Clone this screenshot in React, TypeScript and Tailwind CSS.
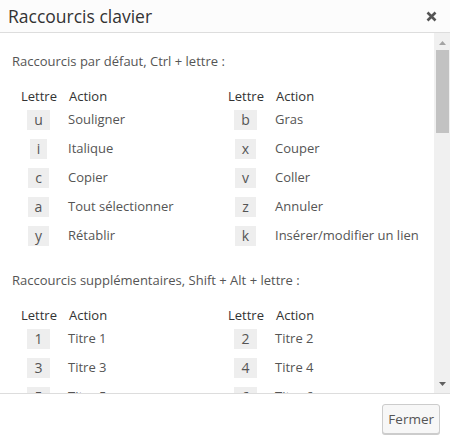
import React from "react";

const font = { fontFamily: '"Open Sans", "Noto Sans", sans-serif' };

type Row = [string, string];

const ctrlRows: [Row, Row][] = [
  [["u", "Souligner"], ["b", "Gras"]],
  [["i", "Italique"], ["x", "Couper"]],
  [["c", "Copier"], ["v", "Coller"]],
  [["a", "Tout sélectionner"], ["z", "Annuler"]],
  [["y", "Rétablir"], ["k", "Insérer/modifier un lien"]],
];

const altRows: [Row, Row][] = [
  [["1", "Titre 1"], ["2", "Titre 2"]],
  [["3", "Titre 3"], ["4", "Titre 4"]],
  [["5", "Titre 5"], ["6", "Titre 6"]],
];

function Half({ rows }: { rows: Row[] }) {
  return (
    <div className="flex flex-col">
      <div className="flex h-[21px] items-center pt-[4px] text-[13px] text-[#333]">
        <div className="w-[48px]">Lettre</div>
        <div>Action</div>
      </div>
      {rows.map(([k, a]) => (
        <div key={k} className="flex h-[29px] items-center text-[13px] text-[#555]">
          <div className="flex w-[35px] justify-center">
            <span className="flex h-[20px] items-center bg-[#eeeeee] px-[7px] text-[14px] leading-none">
              {k}
            </span>
          </div>
          <div className="pl-[12px]">{a}</div>
        </div>
      ))}
    </div>
  );
}

function Section({ title, rows }: { title: string; rows: [Row, Row][] }) {
  return (
    <div>
      <p className="h-[20px] text-[13px] leading-[20px] text-[#555]">{title}</p>
      <div className="mt-[13px] grid grid-cols-[207px_207px] pl-[9px]">
        <Half rows={rows.map((r) => r[0])} />
        <Half rows={rows.map((r) => r[1])} />
      </div>
    </div>
  );
}

export default function App() {
  return (
    <div className="flex h-[442px] w-[450px] flex-col overflow-hidden bg-white" style={font}>
      <div className="flex h-[33px] shrink-0 items-center justify-between border-b border-[#dddddd] bg-[#fcfcfc] pl-[8px] pr-[13px]">
        <span className="text-[17.5px] text-[#333]">Raccourcis clavier</span>
        <svg width="11" height="11" viewBox="0 0 11 11">
          <path d="M1.5 1.5 L9.5 9.5 M9.5 1.5 L1.5 9.5" stroke="#555" strokeWidth="2.6" strokeLinecap="butt" />
        </svg>
      </div>
      <div className="flex h-[360px] shrink-0">
        <div className="flex-1 overflow-hidden pl-[12px] pt-[18px]">
          <Section title="Raccourcis par défaut, Ctrl + lettre :" rows={ctrlRows} />
          <div className="h-[20px]" />
          <Section title="Raccourcis supplémentaires, Shift + Alt + lettre :" rows={altRows} />
        </div>
        <div className="flex w-[16px] flex-col items-center bg-[#f0f0f0]">
          <div className="flex h-[17px] w-full items-center justify-center pt-[2px]">
            <svg width="7" height="4" viewBox="0 0 7 4">
              <path d="M0 4 L3.5 0 L7 4 Z" fill="#a3a3a3" />
            </svg>
          </div>
          <div className="h-[83px] w-[13px] bg-[#c2c2c2]" />
          <div className="flex-1" />
          <div className="flex h-[17px] w-full items-center justify-center pb-[2px]">
            <svg width="7" height="4" viewBox="0 0 7 4">
              <path d="M0 0 L7 0 L3.5 4 Z" fill="#606060" />
            </svg>
          </div>
        </div>
      </div>
      <div className="flex flex-1 items-start justify-end border-t border-[#dddddd] pr-[10px] pt-[10px]">
        <button className="h-[30px] rounded-[3px] border border-[#cccccc] bg-[#f7f7f7] px-[5px] text-[13.5px] text-[#555] shadow-[0_1px_0_#cccccc]">
          Fermer
        </button>
      </div>
    </div>
  );
}
